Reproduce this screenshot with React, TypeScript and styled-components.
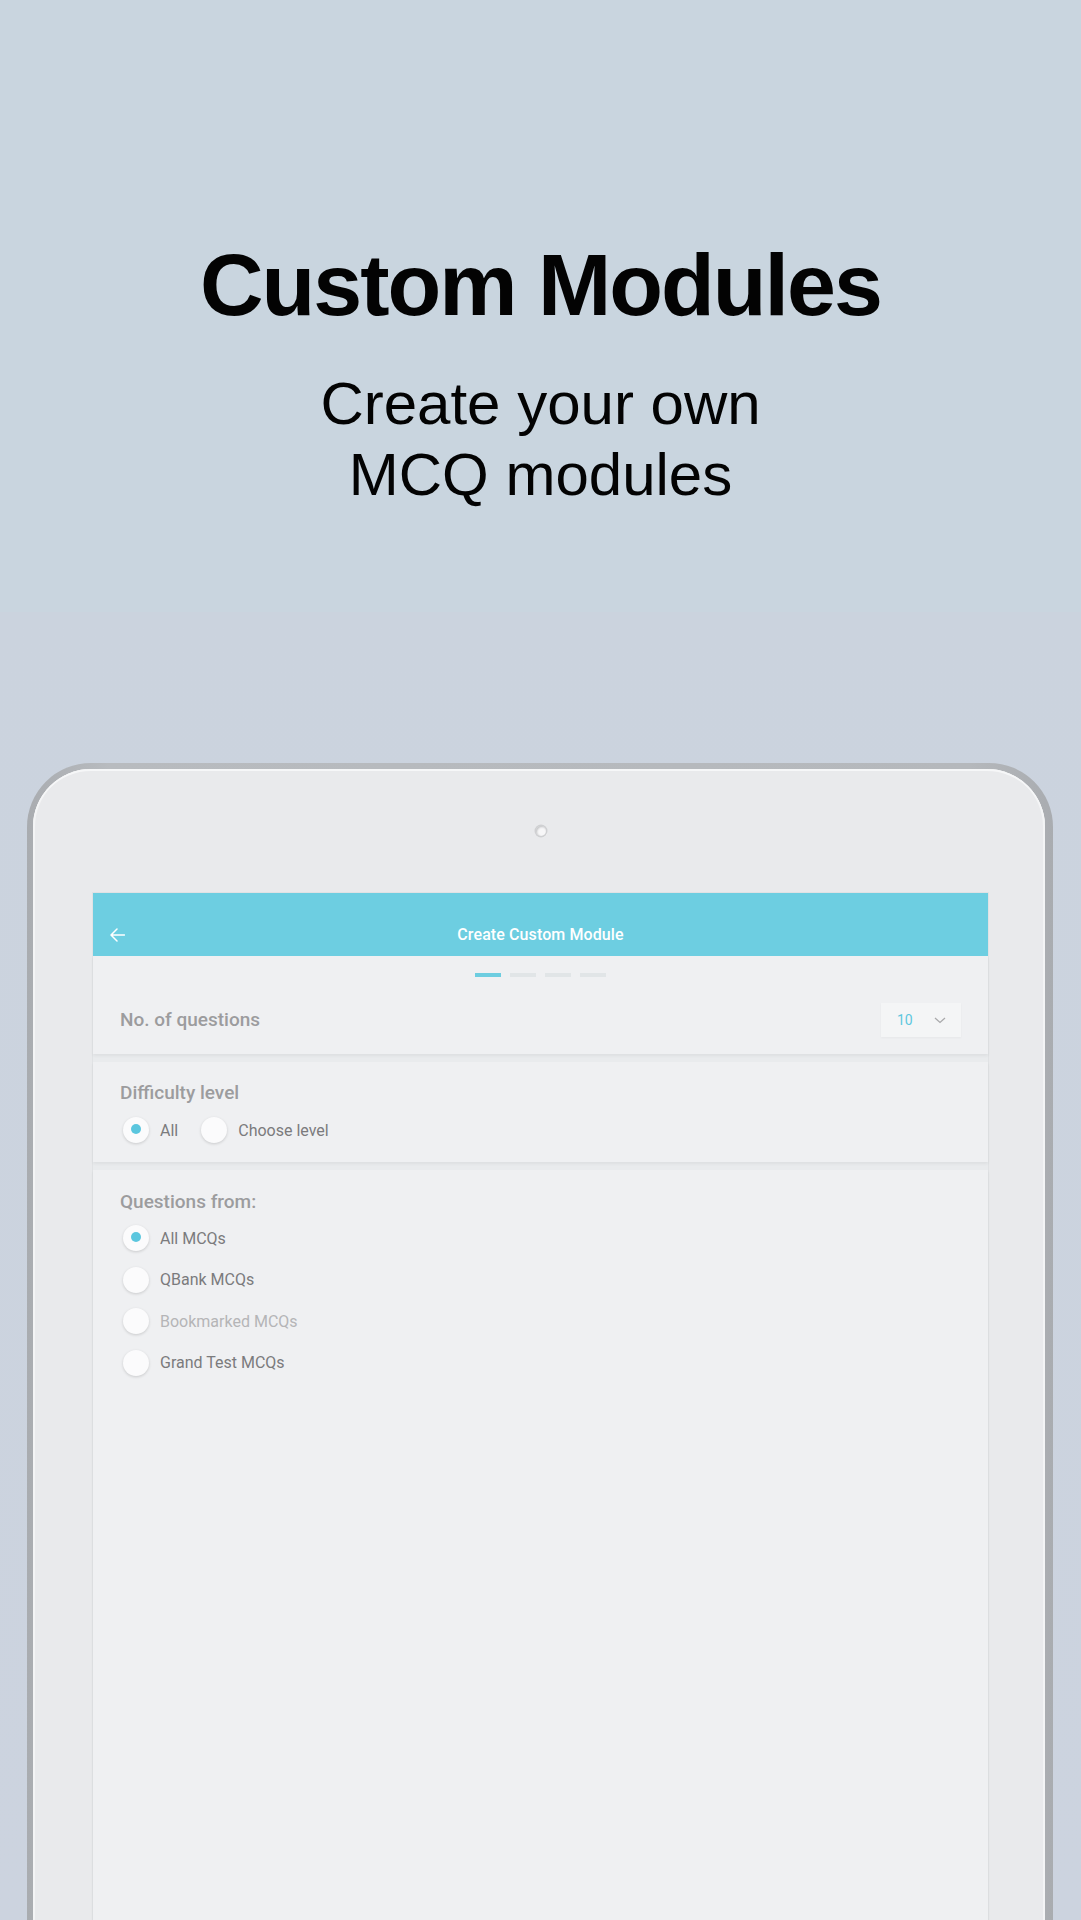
import styled, { createGlobalStyle } from 'styled-components';

const GlobalStyle = createGlobalStyle`
    body {
        margin: 0;
        background: #c9d5df;
    }
    * {
        box-sizing: border-box;
    }
`;

const Page = styled.div`
    width: 1081px;
    height: 1920px;
    overflow: hidden;
    background: linear-gradient(#c9d5df 0, #c9d5df 612px, #cbd3de 612px, #ccd3df 100%);
    font-family: 'Liberation Sans', Arial, sans-serif;
`;

const Hero = styled.header`
    padding-top: 241px;
    text-align: center;
    color: #030303;
`;

const Title = styled.h1`
    margin: 0;
    font-size: 88px;
    line-height: 88px;
    font-weight: 700;
    letter-spacing: -2px;
`;

const Subtitle = styled.p`
    margin: 38.5px 0 0;
    font-size: 60px;
    line-height: 71px;
    font-weight: 400;
`;

const Tablet = styled.div`
    margin: 253.5px 28px 0 27px;
    height: 1160px;
    padding: 6px 8px 0 6px;
    border-radius: 64px 64px 0 0;
    background: linear-gradient(90deg, #a9acb0, #b8bbbf 8%, #b5b8bc 92%, #a9acb0);
`;

const Bezel = styled.div`
    height: 100%;
    display: flex;
    flex-direction: column;
    align-items: center;
    padding: 57px 57px 0 60px;
    border-radius: 58px 58px 0 0;
    background: #e9eaec;
    box-shadow: inset 0 2px 0 #f6f7f8, inset 2px 0 0 #f3f4f5, inset -2px 0 0 #f3f4f5;
`;

const Camera = styled.div`
    width: 10px;
    height: 10px;
    border-radius: 50%;
    background: #f7f7f8;
    box-shadow: 0 0 0 1.5px #cfd0d2, inset 1px 1px 2px #c2c3c5, 1px 1px 1px #ffffff;
    margin-bottom: 57px;
`;

const Screen = styled.div`
    align-self: stretch;
    flex: 1;
    display: flex;
    flex-direction: column;
    gap: 8px;
    background: #e9ebed;
    box-shadow: 0 0 0 1px #e0e2e4;
    font-family: Roboto, 'Noto Sans', sans-serif;
`;

const AppBar = styled.div`
    height: 63px;
    padding-top: 20px;
    display: grid;
    grid-template-columns: 1fr auto 1fr;
    align-items: center;
    background: #6dcee1;
    color: #ffffff;
    margin-bottom: -8px;
`;

const BackButton = styled.div`
    padding-left: 17px;
    display: flex;
    align-items: center;
`;

const AppTitle = styled.div`
    font-size: 16px;
    font-weight: 500;
    letter-spacing: 0.1px;
`;

const Card = styled.section<{ $grow?: boolean }>`
    background: #eff0f2;
    box-shadow: 0 2px 3px rgba(0, 0, 0, 0.05);
    flex: ${(p) => (p.$grow ? 1 : 'none')};
`;

const Steps = styled.div`
    display: flex;
    justify-content: center;
    gap: 9px;
    padding-top: 17px;
`;

const Step = styled.div<{ $active?: boolean }>`
    width: 26px;
    height: 4px;
    background: ${(p) => (p.$active ? '#6dcde0' : '#e1e5e7')};
`;

const CountRow = styled.div`
    display: flex;
    align-items: center;
    justify-content: space-between;
    padding: 26px 27px 17px;
`;

const Label = styled.div`
    font-size: 19px;
    line-height: 22px;
    font-weight: 500;
    color: #9c9c9e;
`;

const Select = styled.div`
    width: 80px;
    height: 34px;
    display: flex;
    align-items: center;
    padding-left: 16px;
    gap: 21px;
    background: #f4f5f6;
    box-shadow: 0 1px 2px rgba(0, 0, 0, 0.04);
    color: #5ec7de;
    font-size: 14px;
`;

const Section = styled(Card)<{ $top: number; $bottom?: number }>`
    padding: ${(p) => p.$top}px 27px ${(p) => p.$bottom ?? 0}px;
`;

const RadioList = styled.div<{ $row?: boolean; $mt: number }>`
    display: flex;
    flex-direction: ${(p) => (p.$row ? 'row' : 'column')};
    gap: ${(p) => (p.$row ? '23px' : '15.5px')};
    margin-top: ${(p) => p.$mt}px;
    padding-left: 3px;
`;

const Option = styled.div<{ $disabled?: boolean }>`
    display: flex;
    align-items: center;
    gap: 11px;
    height: 26px;
    font-size: 16px;
    color: ${(p) => (p.$disabled ? '#b5b5b7' : '#7b7b7d')};
`;

const Radio = styled.span<{ $checked?: boolean }>`
    width: 26px;
    height: 26px;
    border-radius: 50%;
    background: #fbfbfc;
    box-shadow: 0 1px 3px rgba(0, 0, 0, 0.16);
    display: flex;
    align-items: center;
    justify-content: center;

    &::after {
        content: '';
        width: 10px;
        height: 10px;
        margin-top: -2px;
        border-radius: 50%;
        background: ${(p) => (p.$checked ? '#5bc6de' : 'transparent')};
    }
`;

const sources = [
    { text: 'All MCQs', checked: true },
    { text: 'QBank MCQs' },
    { text: 'Bookmarked MCQs', disabled: true },
    { text: 'Grand Test MCQs' },
];

function App() {
    return (
        <Page>
            <GlobalStyle />
            <Hero>
                <Title>Custom Modules</Title>
                <Subtitle>
                    Create your own
                    <br />
                    MCQ modules
                </Subtitle>
            </Hero>
            <Tablet>
                <Bezel>
                    <Camera />
                    <Screen>
                        <AppBar>
                            <BackButton>
                                <svg width='15' height='14' viewBox='0 0 15 14' fill='none'>
                                    <path
                                        d='M14.5 7H1.2M7 1L1 7l6 6'
                                        stroke='#fff'
                                        strokeWidth='1.5'
                                        strokeLinecap='round'
                                        strokeLinejoin='round'
                                    />
                                </svg>
                            </BackButton>
                            <AppTitle>Create Custom Module</AppTitle>
                            <div />
                        </AppBar>
                        <Card>
                            <Steps>
                                <Step $active />
                                <Step />
                                <Step />
                                <Step />
                            </Steps>
                            <CountRow>
                                <Label>No. of questions</Label>
                                <Select>
                                    <span>10</span>
                                    <svg width='12' height='7' viewBox='0 0 12 7' fill='none'>
                                        <path d='M1 1l5 4.5L11 1' stroke='#a9a9ab' strokeWidth='1.3' />
                                    </svg>
                                </Select>
                            </CountRow>
                        </Card>
                        <Section $top={20} $bottom={19}>
                            <Label>Difficulty level</Label>
                            <RadioList $row $mt={13}>
                                <Option>
                                    <Radio $checked />
                                    All
                                </Option>
                                <Option>
                                    <Radio />
                                    Choose level
                                </Option>
                            </RadioList>
                        </Section>
                        <Section $top={21} $grow>
                            <Label>Questions from:</Label>
                            <RadioList $mt={12}>
                                {sources.map((s) => (
                                    <Option key={s.text} $disabled={s.disabled}>
                                        <Radio $checked={s.checked} />
                                        {s.text}
                                    </Option>
                                ))}
                            </RadioList>
                        </Section>
                    </Screen>
                </Bezel>
            </Tablet>
        </Page>
    );
}

export default App;
